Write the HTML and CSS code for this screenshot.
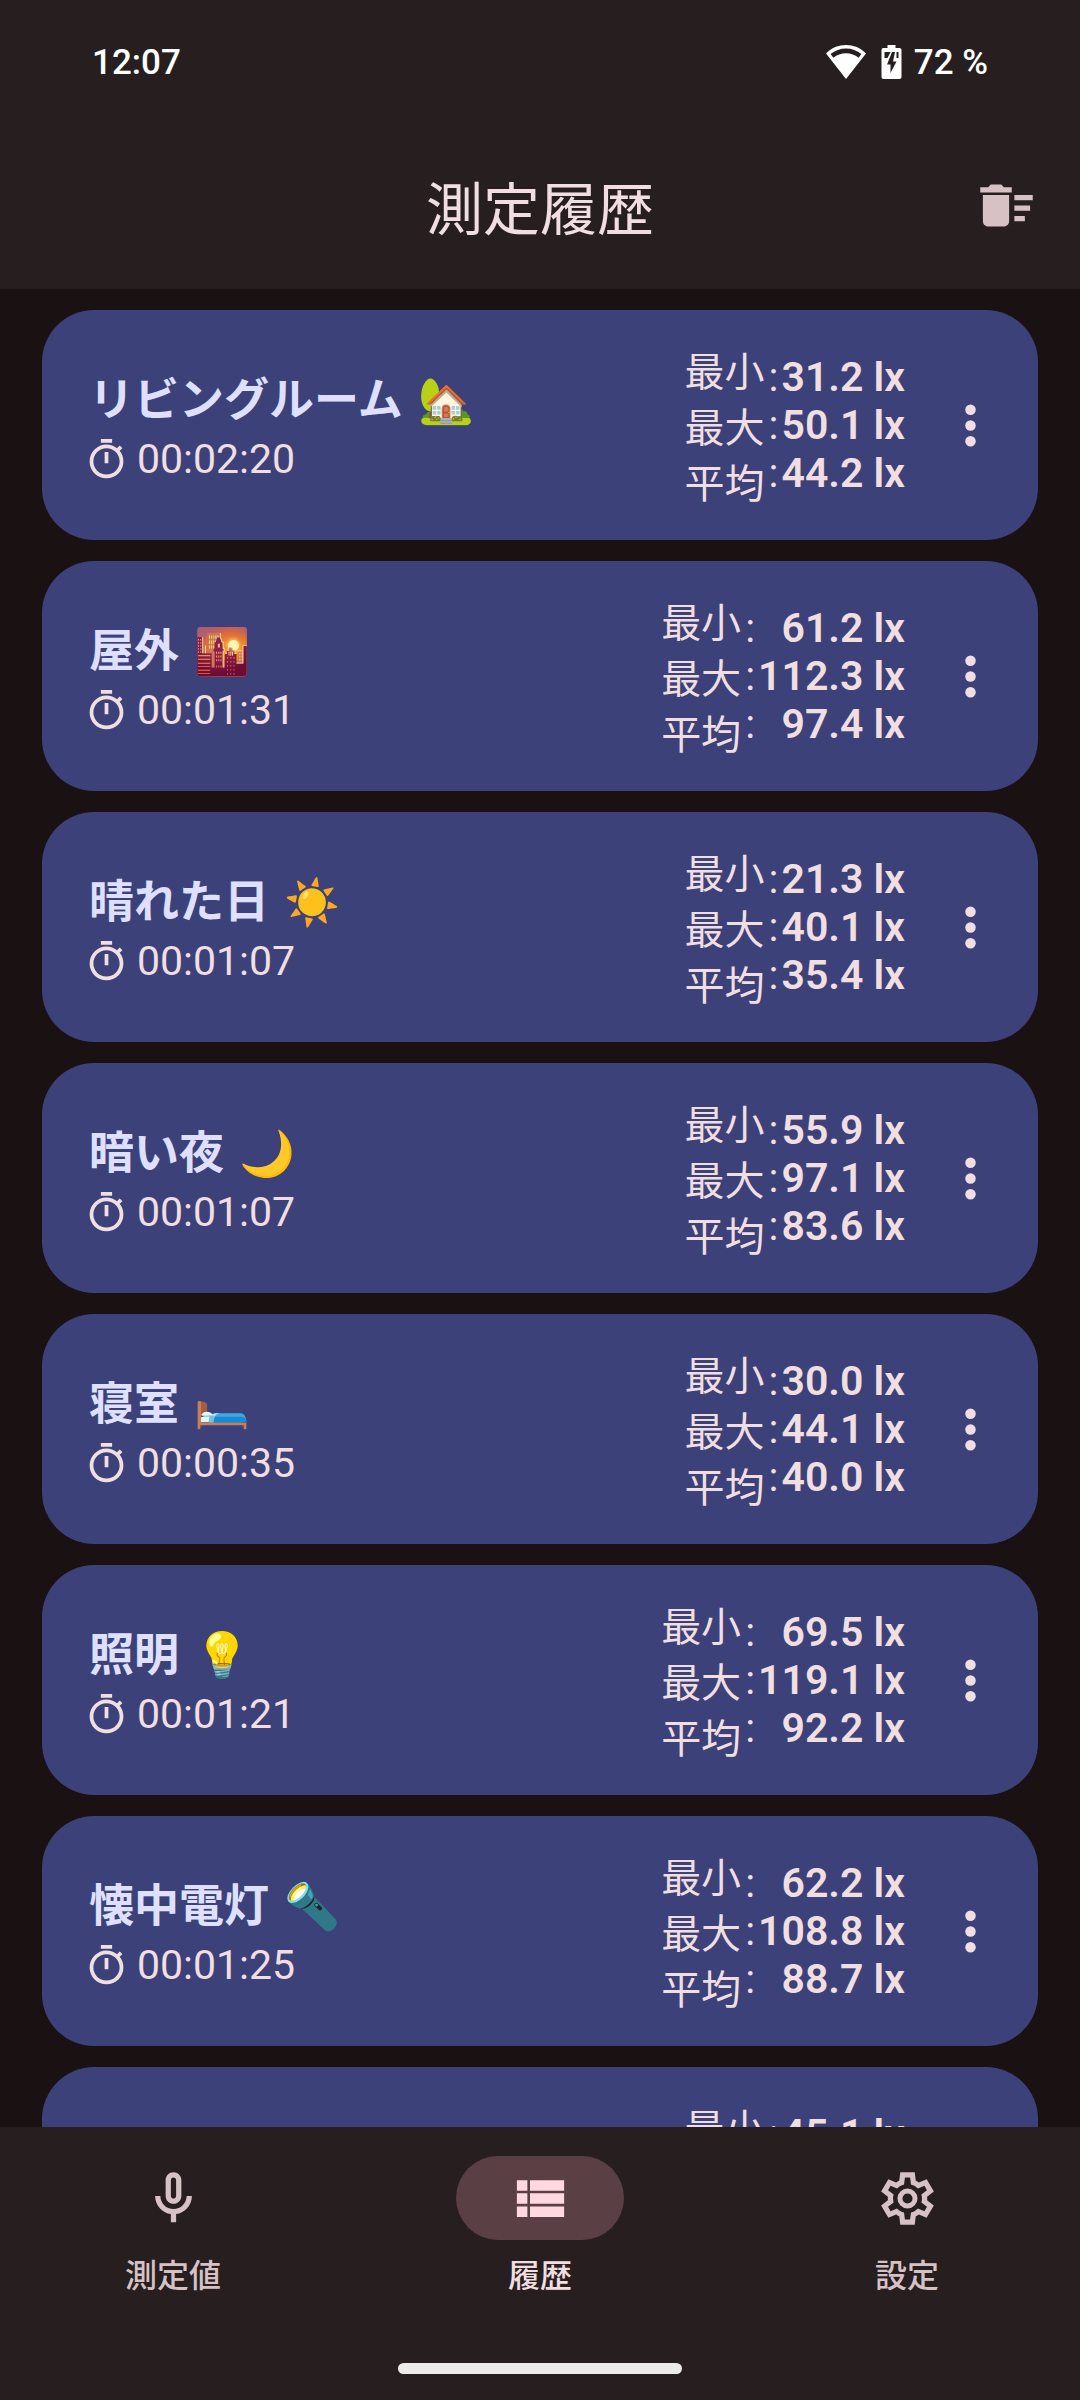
FILE: index.html
```html
<!DOCTYPE html>
<html lang="ja">

<head>
    <meta charset="UTF-8">
    <meta name="viewport" content="width=device-width, initial-scale=1.0">
    <title>測定履歴</title>
    <link rel="stylesheet" href="styles.css">
</head>

<body>
    <!-- Shared icons -->
    <svg class="sprite" aria-hidden="true">
        <symbol id="icon-timer" viewBox="0 0 24 24">
            <path d="M15 1H9v2h6V1zm-4 13h2V8h-2v6zm8.03-6.61l1.42-1.42c-.43-.51-.9-.99-1.41-1.41l-1.42 1.42C16.07 4.74 14.12 4 12 4c-4.97 0-9 4.03-9 9s4.02 9 9 9 9-4.03 9-9c0-2.12-.74-4.07-1.97-5.61zM12 20c-3.87 0-7-3.13-7-7s3.13-7 7-7 7 3.13 7 7-3.13 7-7 7z"/>
        </symbol>
        <symbol id="icon-more" viewBox="0 0 24 24">
            <circle cx="12" cy="6" r="2"/>
            <circle cx="12" cy="12" r="2"/>
            <circle cx="12" cy="18" r="2"/>
        </symbol>
    </svg>

    <header class="header">
        <div class="status-bar">
            <span>12:07</span>
            <div class="status-icons">
                <svg class="wifi" viewBox="0 0 40 34">
                    <path fill-rule="evenodd" d="M20 0C12.500 0 5.500 2.800 0 8.500L20 34 40 8.500C34.500 2.800 27.500 0 20 0zM20 3.500c5.700 0 11 1.900 15.400 5.600l-2.800 3.700C29 9.800 24.700 8.200 20 8.200S11 9.800 7.400 12.800L4.600 9.100C9 5.400 14.300 3.500 20 3.500z"/>
                </svg>
                <svg class="battery" viewBox="0 0 20 34">
                    <path fill-rule="evenodd" d="M6 0h8v3h4a2 2 0 0 1 2 2v27a2 2 0 0 1-2 2H2a2 2 0 0 1-2-2V5a2 2 0 0 1 2-2h4zM3 7v6h3l3-6zM10.500 7L5.500 19.500h3.500V28l6-11.500h-3.500L13.500 7zM15 7v6h2V7z"/>
                </svg>
                <span>72 %</span>
            </div>
        </div>
        <div class="app-bar">
            <h1>測定履歴</h1>
            <button class="delete-button" type="button" aria-label="履歴を削除">
                <svg class="icon" viewBox="0 0 24 24">
                    <path d="M15 16h4v2h-4zm0-8h7v2h-7zm0 4h6v2h-6zM3 18c0 1.100.9 2 2 2h6c1.100 0 2-.9 2-2V8H3v10zM14 5h-3l-1-1H6L5 5H2v2h12z"/>
                </svg>
            </button>
        </div>
    </header>

    <main class="history">
        <article class="card">
            <div class="info">
                <h2>リビングルーム <span class="emoji">🏡</span></h2>
                <p class="time"><svg><use href="#icon-timer"/></svg>00:02:20</p>
            </div>
            <div class="stats">
                <div class="labels"><span>最小</span><span>最大</span><span>平均</span></div>
                <div class="colons"><span>:</span><span>:</span><span>:</span></div>
                <div class="values"><span>31.2 lx</span><span>50.1 lx</span><span>44.2 lx</span></div>
            </div>
            <button class="menu-button" type="button" aria-label="メニュー"><svg class="icon"><use href="#icon-more"/></svg></button>
        </article>

        <article class="card">
            <div class="info">
                <h2>屋外 <span class="emoji">🌇</span></h2>
                <p class="time"><svg><use href="#icon-timer"/></svg>00:01:31</p>
            </div>
            <div class="stats">
                <div class="labels"><span>最小</span><span>最大</span><span>平均</span></div>
                <div class="colons"><span>:</span><span>:</span><span>:</span></div>
                <div class="values"><span>61.2 lx</span><span>112.3 lx</span><span>97.4 lx</span></div>
            </div>
            <button class="menu-button" type="button" aria-label="メニュー"><svg class="icon"><use href="#icon-more"/></svg></button>
        </article>

        <article class="card">
            <div class="info">
                <h2>晴れた日 <span class="emoji">☀️</span></h2>
                <p class="time"><svg><use href="#icon-timer"/></svg>00:01:07</p>
            </div>
            <div class="stats">
                <div class="labels"><span>最小</span><span>最大</span><span>平均</span></div>
                <div class="colons"><span>:</span><span>:</span><span>:</span></div>
                <div class="values"><span>21.3 lx</span><span>40.1 lx</span><span>35.4 lx</span></div>
            </div>
            <button class="menu-button" type="button" aria-label="メニュー"><svg class="icon"><use href="#icon-more"/></svg></button>
        </article>

        <article class="card">
            <div class="info">
                <h2>暗い夜 <span class="emoji">🌙</span></h2>
                <p class="time"><svg><use href="#icon-timer"/></svg>00:01:07</p>
            </div>
            <div class="stats">
                <div class="labels"><span>最小</span><span>最大</span><span>平均</span></div>
                <div class="colons"><span>:</span><span>:</span><span>:</span></div>
                <div class="values"><span>55.9 lx</span><span>97.1 lx</span><span>83.6 lx</span></div>
            </div>
            <button class="menu-button" type="button" aria-label="メニュー"><svg class="icon"><use href="#icon-more"/></svg></button>
        </article>

        <article class="card">
            <div class="info">
                <h2>寝室 <span class="emoji">🛏️</span></h2>
                <p class="time"><svg><use href="#icon-timer"/></svg>00:00:35</p>
            </div>
            <div class="stats">
                <div class="labels"><span>最小</span><span>最大</span><span>平均</span></div>
                <div class="colons"><span>:</span><span>:</span><span>:</span></div>
                <div class="values"><span>30.0 lx</span><span>44.1 lx</span><span>40.0 lx</span></div>
            </div>
            <button class="menu-button" type="button" aria-label="メニュー"><svg class="icon"><use href="#icon-more"/></svg></button>
        </article>

        <article class="card">
            <div class="info">
                <h2>照明 <span class="emoji">💡</span></h2>
                <p class="time"><svg><use href="#icon-timer"/></svg>00:01:21</p>
            </div>
            <div class="stats">
                <div class="labels"><span>最小</span><span>最大</span><span>平均</span></div>
                <div class="colons"><span>:</span><span>:</span><span>:</span></div>
                <div class="values"><span>69.5 lx</span><span>119.1 lx</span><span>92.2 lx</span></div>
            </div>
            <button class="menu-button" type="button" aria-label="メニュー"><svg class="icon"><use href="#icon-more"/></svg></button>
        </article>

        <article class="card">
            <div class="info">
                <h2>懐中電灯 <span class="emoji">🔦</span></h2>
                <p class="time"><svg><use href="#icon-timer"/></svg>00:01:25</p>
            </div>
            <div class="stats">
                <div class="labels"><span>最小</span><span>最大</span><span>平均</span></div>
                <div class="colons"><span>:</span><span>:</span><span>:</span></div>
                <div class="values"><span>62.2 lx</span><span>108.8 lx</span><span>88.7 lx</span></div>
            </div>
            <button class="menu-button" type="button" aria-label="メニュー"><svg class="icon"><use href="#icon-more"/></svg></button>
        </article>

        <article class="card">
            <div class="info"></div>
            <div class="stats">
                <div class="labels"><span>最小</span></div>
                <div class="colons"><span>:</span></div>
                <div class="values"><span>45.1 lx</span></div>
            </div>
            <button class="menu-button" type="button" aria-label="メニュー"><svg class="icon"><use href="#icon-more"/></svg></button>
        </article>
    </main>

    <footer class="bottom">
        <nav class="nav">
            <a href="#measure">
                <span class="pill">
                    <svg class="icon" viewBox="0 0 24 24">
                        <path d="M12 14c1.660 0 3-1.340 3-3V5c0-1.660-1.340-3-3-3S9 3.340 9 5v6c0 1.660 1.340 3 3 3zm-1-9c0-.55.45-1 1-1s1 .45 1 1v6c0 .55-.45 1-1 1s-1-.45-1-1V5zm6 6c0 2.760-2.240 5-5 5s-5-2.240-5-5H5c0 3.530 2.610 6.430 6 6.920V21h2v-3.080c3.390-.49 6-3.390 6-6.920h-2z"/>
                    </svg>
                </span>
                測定値
            </a>
            <a class="active" href="#history" aria-current="page">
                <span class="pill">
                    <svg class="icon" viewBox="0 0 24 24">
                        <path d="M3 5h4v4H3zM8 5h13v4H8zM3 10h4v4H3zM8 10h13v4H8zM3 15h4v4H3zM8 15h13v4H8z"/>
                    </svg>
                </span>
                履歴
            </a>
            <a href="#settings">
                <span class="pill">
                    <svg class="icon" viewBox="0 -960 960 960">
                        <path d="m370-80-16-128q-13-5-24.500-12T307-235l-119 50L78-375l103-78q-1-7-1-13.500v-27q0-6.500 1-13.500L78-585l110-190 119 50q11-8 23-15t24-12l16-128h220l16 128q13 5 24.500 12t22.500 15l119-50 110 190-103 78q1 7 1 13.500v27q0 6.500-2 13.500l103 78-110 190-118-50q-11 8-23 15t-24 12L590-80H370Zm70-80h79l14-106q31-8 57.500-23.500T639-327l99 41 39-68-86-65q5-14 7-29.500t2-31.500q0-16-2-31.500t-7-29.500l86-65-39-68-99 42q-22-23-48.500-38.500T533-694l-13-106h-79l-14 106q-31 8-57.500 23.500T321-633l-99-41-39 68 86 64q-5 15-7 30t-2 32q0 16 2 31t7 30l-86 65 39 68 99-42q22 23 48.500 38.500T427-266l13 106Z"/>
                        <circle class="hub" cx="480" cy="-480" r="115"/>
                    </svg>
                </span>
                設定
            </a>
        </nav>
        <div class="home-bar"></div>
    </footer>
</body>

</html>
```
FILE: styles.css
```css
/* Global styles */
* {
    box-sizing: border-box;
}

body {
    display: flex;
    flex-direction: column;
    height: 100vh;
    margin: 0;
    background-color: #1a1113;
    color: #f0dee0;
    font-family: Roboto, "Noto Sans CJK JP", sans-serif;
}

button {
    display: flex;
    align-items: center;
    justify-content: center;
    padding: 0;
    border: none;
    background: none;
    color: inherit;
    cursor: pointer;
}

svg {
    display: block;
    fill: currentColor;
}

.sprite {
    display: none;
}

.icon {
    width: 63px;
    height: 63px;
}

/* Header */
.header {
    background-color: #261e1f;
}

.status-bar {
    display: flex;
    align-items: center;
    justify-content: space-between;
    height: 124px;
    padding: 0 92px;
    color: #fff;
    font-size: 35px;
    font-weight: 500;
}

.status-icons {
    display: flex;
    align-items: center;
}

.wifi {
    width: 40px;
    height: 34px;
    margin-right: 15px;
}

.battery {
    width: 21px;
    height: 34px;
    margin-right: 12px;
}

.app-bar {
    display: grid;
    grid-template-columns: 1fr auto 1fr;
    align-items: center;
    height: 165px;
    padding: 0 11px 3px;
}

.app-bar h1 {
    grid-column: 2;
    margin: 0;
    font-size: 57px;
    font-weight: 400;
}

.delete-button {
    justify-self: end;
    width: 126px;
    height: 126px;
    color: #d6c2c4;
}

/* Measurement list */
.history {
    display: flex;
    flex: 1;
    flex-direction: column;
    gap: 21px;
    min-height: 0;
    padding: 21px 42px 0;
    overflow: hidden;
}

.card {
    display: flex;
    flex-shrink: 0;
    align-items: center;
    height: 230px;
    padding: 0 5px 0 42px;
    border-radius: 52px;
    background-color: #3c4279;
}

.info {
    flex: 1;
    padding-top: 8px;
}

.info h2 {
    margin: 0;
    padding-left: 5px;
    color: #dfe0ff;
    font-size: 45px;
    font-weight: 700;
    line-height: 60px;
}

.emoji {
    margin-left: 4px;
}

.time {
    display: flex;
    align-items: center;
    gap: 8px;
    margin: 0;
    font-size: 41px;
    line-height: 56px;
}

.time svg {
    width: 45px;
    height: 45px;
}

.stats {
    display: flex;
    align-self: flex-start;
    padding: 35px 2px 0 0;
    font-size: 41px;
}

.stats div {
    display: flex;
    flex-direction: column;
    line-height: 48px;
}

.stats .labels {
    font-size: 40px;
    line-height: 56px;
}

.stats .colons {
    padding: 8px 3px 0 4px;
}

.stats .values {
    padding-top: 8px;
    font-weight: 600;
    text-align: right;
}

.menu-button {
    width: 126px;
    height: 126px;
}

/* Bottom navigation */
.bottom {
    padding: 29px 0 26px;
    background-color: #261e1f;
}

.nav {
    display: flex;
    gap: 21px;
}

.nav a {
    display: flex;
    flex: 1;
    flex-direction: column;
    align-items: center;
    gap: 12px;
    color: #d6c2c4;
    font-size: 32px;
    font-weight: 500;
    line-height: 48px;
    text-decoration: none;
}

.nav a.active {
    color: #f0dee0;
}

.pill {
    display: flex;
    align-items: center;
    justify-content: center;
    width: 168px;
    height: 84px;
    border-radius: 42px;
}

.active .pill {
    background-color: #5a3f45;
    color: #ffd9df;
}

.hub {
    fill: none;
    stroke: currentColor;
    stroke-width: 76;
}

.home-bar {
    width: 284px;
    height: 11px;
    margin: 63px auto 0;
    border-radius: 6px;
    background-color: #ecebea;
}
```
